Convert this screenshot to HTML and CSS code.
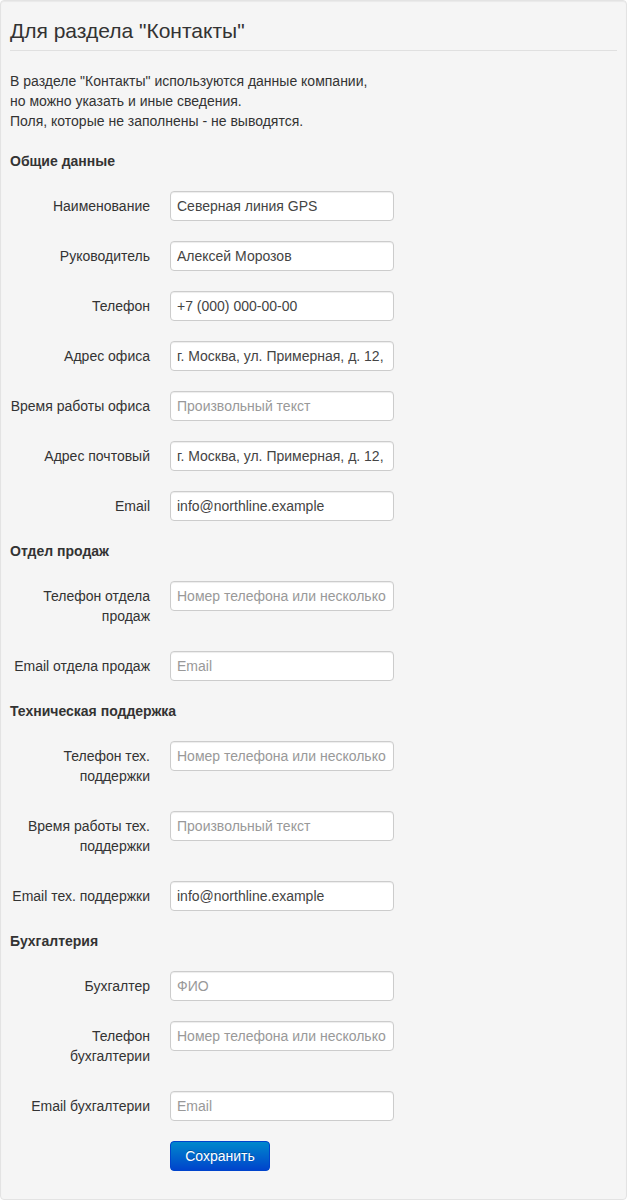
FILE: index.html
```html
<!DOCTYPE html>
<html lang="ru">
<head>
  <meta charset="UTF-8">
  <meta name="viewport" content="width=device-width, initial-scale=1.0">
  <title>Контакты</title>
  <link rel="stylesheet" href="styles.css">
</head>
<body>
<div class="well">
  <h3 class="well-title">Для раздела "Контакты"</h3>

  <p class="intro">
    В разделе "Контакты" используются данные компании,<br>
    но можно указать и иные сведения.<br>
    Поля, которые не заполнены - не выводятся.
  </p>

  <form class="contacts-form">
    <!-- Общие данные -->
    <div class="section-title">Общие данные</div>
    <div class="form-row">
      <label class="form-label">Наименование</label>
      <input class="form-input" type="text" value="Северная линия GPS">
    </div>
    <div class="form-row">
      <label class="form-label">Руководитель</label>
      <input class="form-input" type="text" value="Алексей Морозов">
    </div>
    <div class="form-row">
      <label class="form-label">Телефон</label>
      <input class="form-input" type="text" value="+7 (000) 000-00-00">
    </div>
    <div class="form-row">
      <label class="form-label">Адрес офиса</label>
      <input class="form-input" type="text" value="г. Москва, ул. Примерная, д. 12, офис 3">
    </div>
    <div class="form-row">
      <label class="form-label">Время работы офиса</label>
      <input class="form-input" type="text" placeholder="Произвольный текст">
    </div>
    <div class="form-row">
      <label class="form-label">Адрес почтовый</label>
      <input class="form-input" type="text" value="г. Москва, ул. Примерная, д. 12, офис 3">
    </div>
    <div class="form-row">
      <label class="form-label">Email</label>
      <input class="form-input" type="text" value="info@northline.example">
    </div>

    <!-- Отдел продаж -->
    <div class="section-title">Отдел продаж</div>
    <div class="form-row">
      <label class="form-label">Телефон отдела продаж</label>
      <input class="form-input" type="text" placeholder="Номер телефона или несколько номеров">
    </div>
    <div class="form-row">
      <label class="form-label">Email отдела продаж</label>
      <input class="form-input" type="text" placeholder="Email">
    </div>

    <!-- Техническая поддержка -->
    <div class="section-title">Техническая поддержка</div>
    <div class="form-row">
      <label class="form-label">Телефон тех. поддержки</label>
      <input class="form-input" type="text" placeholder="Номер телефона или несколько номеров">
    </div>
    <div class="form-row">
      <label class="form-label">Время работы тех. поддержки</label>
      <input class="form-input" type="text" placeholder="Произвольный текст">
    </div>
    <div class="form-row">
      <label class="form-label">Email тех. поддержки</label>
      <input class="form-input" type="text" value="info@northline.example">
    </div>

    <!-- Бухгалтерия -->
    <div class="section-title">Бухгалтерия</div>
    <div class="form-row">
      <label class="form-label">Бухгалтер</label>
      <input class="form-input" type="text" placeholder="ФИО">
    </div>
    <div class="form-row">
      <label class="form-label">Телефон бухгалтерии</label>
      <input class="form-input" type="text" placeholder="Номер телефона или несколько номеров">
    </div>
    <div class="form-row">
      <label class="form-label">Email бухгалтерии</label>
      <input class="form-input" type="text" placeholder="Email">
    </div>

    <div class="form-actions">
      <button class="btn-primary" type="button">Сохранить</button>
    </div>
  </form>
</div>
</body>
</html>
```

FILE: styles.css
```css
body {
  margin: 0;
  font-family: "Liberation Sans", Arial, sans-serif;
  font-size: 14px;
  line-height: 20px;
  color: #333;
  background-color: #fff;
}

/* Panel around the whole form */
.well {
  box-sizing: border-box;
  width: 627px;
  height: 1200px;
  padding: 0 9px;
  background-color: #f5f5f5;
  border: 1px solid #e3e3e3;
  border-radius: 4px;
  box-shadow: inset 0 1px 1px rgba(0, 0, 0, 0.05);
}

.well-title {
  margin: 0;
  padding: 15px 0 4px;
  font-size: 21px;
  font-weight: normal;
  line-height: 30px;
  border-bottom: 1px solid #e0e0e0;
}

.intro {
  margin: 20px 0;
}

.section-title {
  margin-bottom: 20px;
  font-weight: bold;
}

/* Label + input rows */
.form-row {
  display: flex;
  align-items: flex-start;
  margin-bottom: 20px;
}

.form-label {
  width: 140px;
  padding: 5px 0;
  text-align: right;
}

.form-input {
  box-sizing: border-box;
  width: 224px;
  height: 30px;
  margin-left: 20px;
  padding: 4px 6px;
  font-family: inherit;
  font-size: 14px;
  color: #444;
  background-color: #fff;
  border: 1px solid #ccc;
  border-radius: 4px;
  box-shadow: inset 0 1px 1px rgba(0, 0, 0, 0.075);
}

.form-input::placeholder {
  color: #999;
}

.form-actions {
  padding-left: 160px;
}

.btn-primary {
  width: 100px;
  height: 30px;
  font-family: inherit;
  font-size: 14px;
  color: #fff;
  background-color: #006dcc;
  background-image: linear-gradient(to bottom, #0088cc, #0044cc);
  border: 1px solid #04c;
  border-radius: 4px;
  text-shadow: 0 -1px 0 rgba(0, 0, 0, 0.25);
  cursor: pointer;
}
```
